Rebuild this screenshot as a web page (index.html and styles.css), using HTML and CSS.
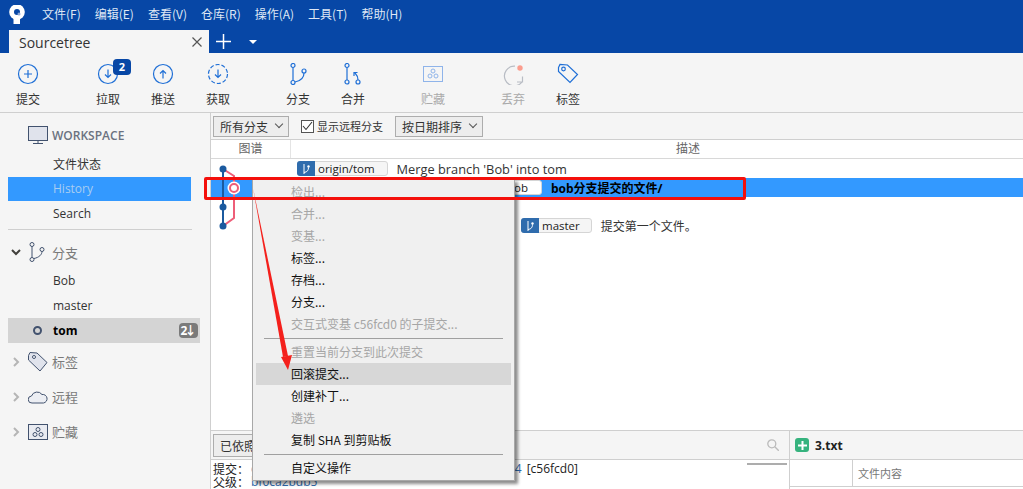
FILE: index.html
```html
<!DOCTYPE html>
<html lang="zh-CN">
<head>
    <meta charset="UTF-8">
    <title>Sourcetree</title>
    <link rel="stylesheet" href="styles.css">
</head>
<body>
    <header class="menubar">
        <svg class="app-logo" width="18" height="20" viewBox="0 0 18 20">
            <circle cx="9" cy="7" r="7.800" fill="#fff"/>
            <path d="M5.500 12h6.500v7H5.500z" fill="#fff"/>
            <circle cx="9" cy="7" r="3" fill="#0747a6"/>
            <circle cx="11" cy="9" r="1.500" fill="#8fa9d6"/>
        </svg>
        <nav class="menu-items">
            <span>文件(F)</span><span>编辑(E)</span><span>查看(V)</span><span>仓库(R)</span><span>操作(A)</span><span>工具(T)</span><span>帮助(H)</span>
        </nav>
    </header>

    <div class="tabstrip">
        <div class="tab">
            <span>Sourcetree</span>
            <svg width="10" height="10" viewBox="0 0 10 10"><path d="M.5.500l9 9M9.500.500l-9 9" stroke="#555" stroke-width="1.200"/></svg>
        </div>
        <svg class="tab-plus" width="15" height="15" viewBox="0 0 15 15"><path d="M7.500 0v15M0 7.500h15" stroke="#fff" stroke-width="1.500"/></svg>
        <span class="tab-caret"></span>
    </div>

    <div class="toolbar">
        <div class="tool tool-commit">
            <svg width="22" height="22" viewBox="0 0 22 22"><circle cx="11" cy="11" r="9.500" class="ic"/><path d="M11 7v8M7 11h8" class="ic"/></svg>
            <span>提交</span>
        </div>
        <div class="tool tool-pull">
            <svg width="22" height="22" viewBox="0 0 22 22"><circle cx="11" cy="11" r="9.500" class="ic"/><path d="M11 6.500v8M8 11.500l3 3 3-3" class="ic"/></svg>
            <span>拉取</span>
            <b class="badge">2</b>
        </div>
        <div class="tool tool-push">
            <svg width="22" height="22" viewBox="0 0 22 22"><circle cx="11" cy="11" r="9.500" class="ic"/><path d="M11 15.500v-8M8 10.500l3-3 3 3" class="ic"/></svg>
            <span>推送</span>
        </div>
        <div class="tool tool-fetch">
            <svg width="22" height="22" viewBox="0 0 22 22"><circle cx="11" cy="11" r="9.500" class="ic" stroke-dasharray="4 2"/><path d="M11 6.500v8M8 11.500l3 3 3-3" class="ic"/></svg>
            <span>获取</span>
        </div>
        <div class="tool tool-branch">
            <svg width="22" height="22" viewBox="0 0 22 22"><circle cx="6" cy="2.500" r="2" class="ic"/><circle cx="6" cy="19.500" r="2" class="ic"/><circle cx="17" cy="8" r="2" class="ic"/><path d="M6 4.500v13M8 19c5-1 9-4 9-9" class="ic"/></svg>
            <span>分支</span>
        </div>
        <div class="tool tool-merge">
            <svg width="22" height="22" viewBox="0 0 22 22"><circle cx="5" cy="2.500" r="2" class="ic"/><circle cx="5" cy="19" r="2" class="ic"/><circle cx="16" cy="19" r="2" class="ic"/><path d="M5 4.500v12.500M16 17c0-3-1-5-3-7M12 13V9.500h3.500" class="ic"/></svg>
            <span>合并</span>
        </div>
        <div class="tool tool-stash is-off">
            <svg width="22" height="22" viewBox="0 0 22 22"><rect x="1.500" y="3.500" width="19" height="15" class="ic-pale"/><circle cx="11" cy="8" r="2" class="ic-pale"/><circle cx="8" cy="13" r="2" class="ic-pale"/><circle cx="14" cy="13" r="2" class="ic-pale"/></svg>
            <span>贮藏</span>
        </div>
        <div class="tool tool-discard is-off">
            <svg width="22" height="22" viewBox="0 0 22 22"><path d="M13 3.200a9.800 9.800 0 1 0 7 15.800M20.500 13.500V19H15" fill="none" stroke="#b8bcc4" stroke-width="1.200"/><circle cx="18" cy="5" r="2.700" fill="#fb9d8e"/></svg>
            <span>丢弃</span>
        </div>
        <div class="tool tool-tag">
            <svg width="22" height="22" viewBox="0 0 22 22"><path d="M1.500 4.500L3 1.500l7.500.5 10 9.500-7.500 8-11.500-11z" class="ic"/><circle cx="6.500" cy="6" r="1.800" class="ic"/></svg>
            <span>标签</span>
        </div>
    </div>

    <main class="workspace">
        <aside class="sidebar">
            <div class="side-head">
                <svg width="20" height="19" viewBox="0 0 20 19"><rect x=".5" y=".5" width="19" height="14" fill="#e0e3ec" stroke="#42526e"/><path d="M10 15v2M5 17.500h10" stroke="#42526e"/></svg>
                <span>WORKSPACE</span>
            </div>
            <div class="side-item">文件状态</div>
            <div class="side-item is-active">History</div>
            <div class="side-item">Search</div>
            <hr class="side-rule">
            <div class="side-group side-branches">
                <svg class="chevron-open" width="10" height="7" viewBox="0 0 10 7"><path d="M1 1l4 4 4-4" fill="none" stroke="#42403c" stroke-width="2"/></svg>
                <svg class="side-icon" width="20" height="20" viewBox="-1 0 20 20"><circle cx="3" cy="2.500" r="2" class="ic-dark"/><circle cx="3" cy="17.500" r="2" class="ic-dark"/><circle cx="13" cy="7.500" r="2" class="ic-dark"/><path d="M3 4.500v11M5 16.500c5-1 8-4 8-7" class="ic-dark"/></svg>
                <span>分支</span>
            </div>
            <div class="side-item">Bob</div>
            <div class="side-item">master</div>
            <div class="side-item is-current">
                <span class="head-dot"></span><b>tom</b><span class="behind">2↓</span>
            </div>
            <div class="side-group">
                <svg class="chevron" width="7" height="10" viewBox="0 0 7 10"><path d="M1 1l4 4-4 4" fill="none" stroke="#b5b5b5" stroke-width="2"/></svg>
                <svg class="side-icon" width="20" height="20" viewBox="0 0 20 20"><path d="M.5 3.500L2 .5l7 .5 10 9.500-7 8.500L.5 8z" fill="#e0e3ec" stroke="#42526e"/><circle cx="6" cy="5" r="1.500" fill="#fff" stroke="#42526e"/></svg>
                <span>标签</span>
            </div>
            <div class="side-group">
                <svg class="chevron" width="7" height="10" viewBox="0 0 7 10"><path d="M1 1l4 4-4 4" fill="none" stroke="#b5b5b5" stroke-width="2"/></svg>
                <svg class="side-icon" width="20" height="14" viewBox="0 0 20 14"><path d="M4 13a3.500 3.500 0 0 1-.5-7A6 6 0 0 1 14 4.500 4.300 4.300 0 0 1 15.500 13z" fill="#eceef3" stroke="#42526e"/></svg>
                <span>远程</span>
            </div>
            <div class="side-group">
                <svg class="chevron" width="7" height="10" viewBox="0 0 7 10"><path d="M1 1l4 4-4 4" fill="none" stroke="#b5b5b5" stroke-width="2"/></svg>
                <svg class="side-icon" width="20" height="16" viewBox="0 0 20 16"><rect x=".5" y=".5" width="19" height="15" fill="#e9ebf1" stroke="#42526e"/><circle cx="10" cy="5.500" r="2" fill="none" stroke="#42526e"/><circle cx="7" cy="10.500" r="2" fill="none" stroke="#42526e"/><circle cx="13" cy="10.500" r="2" fill="none" stroke="#42526e"/></svg>
                <span>贮藏</span>
            </div>
        </aside>

        <section class="content">
            <div class="filterbar">
                <div class="select">所有分支<i class="caret"></i></div>
                <label class="check"><span class="box"><svg width="11" height="10" viewBox="0 0 11 10"><path d="M1 5l3 3.500L10 1" fill="none" stroke="#333" stroke-width="1.100"/></svg></span>显示远程分支</label>
                <div class="select">按日期排序<i class="caret"></i></div>
            </div>
            <div class="table-head">
                <div class="col-graph">图谱</div>
                <div class="col-desc">描述</div>
            </div>
            <div class="commits">
                <div class="row">
                    <div class="graph-cell"></div>
                    <span class="ref ref-origin"><i class="ref-icon"><svg width="10" height="12" viewBox="0 0 10 12"><path d="M3 1v10M3 9.500c3.500-.5 4.500-2.500 4.500-5" fill="none" stroke="#fff"/><circle cx="7.500" cy="3.500" r="1.200" fill="#fff"/></svg></i>origin/tom</span>
                    <span class="msg msg-en">Merge branch 'Bob' into tom</span>
                </div>
                <div class="row is-selected">
                    <div class="graph-cell"></div>
                    <span class="ref ref-bob">ob</span>
                    <span class="msg"><b>bob分支提交的文件/</b></span>
                </div>
                <div class="row"><div class="graph-cell"></div></div>
                <div class="row">
                    <div class="graph-cell"></div>
                    <span class="ref ref-master"><i class="ref-icon"><svg width="10" height="12" viewBox="0 0 10 12"><path d="M3 1v10M3 9.500c3.500-.5 4.500-2.500 4.500-5" fill="none" stroke="#fff"/><circle cx="7.500" cy="3.500" r="1.200" fill="#fff"/></svg></i>master</span>
                    <span class="msg">提交第一个文件。</span>
                </div>
                <svg class="graph" width="30" height="76" viewBox="0 0 30 76">
                    <path d="M13 10v57" stroke="#1b5a9f" stroke-width="2"/>
                    <path d="M13 10l11 7v42l-11 8" fill="none" stroke="#ee5e78" stroke-width="2"/>
                    <circle cx="13" cy="10" r="3.500" fill="#1b5a9f"/>
                    <circle cx="13" cy="48" r="3.500" fill="#1b5a9f"/>
                    <circle cx="13" cy="67" r="3.500" fill="#1b5a9f"/>
                    <circle cx="24" cy="29" r="6.500" fill="#fff"/>
                    <circle cx="24" cy="29" r="4" fill="#fff" stroke="#ee5e78" stroke-width="2"/>
                </svg>
            </div>
            <div class="details">
                <div class="detail-left">
                    <div class="detail-bar">
                        <div class="select select-sort">已依照</div>
                        <svg class="search" width="12" height="12" viewBox="0 0 12 12"><circle cx="4.800" cy="4.800" r="4" fill="none" stroke="#bbb" stroke-width="1.300"/><path d="M7.800 7.800l4 4" stroke="#bbb" stroke-width="1.300"/></svg>
                    </div>
                    <div class="detail-meta">
                        <div class="meta-line"><span class="meta-key">提交：</span><span class="hash">c</span><span class="hash hash-end">4</span><span class="short-hash">[c56fcd0]</span></div>
                        <div class="meta-line"><span class="meta-key">父级：</span><span class="hash">bf0ca2bdb5</span></div>
                        <i class="meta-scroll"></i>
                    </div>
                </div>
                <div class="detail-right">
                    <div class="file-bar">
                        <span class="added"><svg width="9" height="9" viewBox="0 0 9 9"><path d="M4.500 0v9M0 4.500h9" stroke="#fff" stroke-width="2"/></svg></span>
                        <b>3.txt</b>
                    </div>
                    <div class="file-head">
                        <div class="file-gutter"></div>
                        <div class="file-label">文件内容</div>
                    </div>
                </div>
            </div>
        </section>
    </main>

    <!-- right click menu on the selected commit -->
    <div class="context-menu">
        <div class="menu-row is-off">检出...</div>
        <div class="menu-row is-off">合并...</div>
        <div class="menu-row is-off">变基...</div>
        <div class="menu-row">标签...</div>
        <div class="menu-row">存档...</div>
        <div class="menu-row">分支...</div>
        <div class="menu-row is-off">交互式变基 c56fcd0 的子提交...</div>
        <hr class="menu-rule">
        <div class="menu-row is-off">重置当前分支到此次提交</div>
        <div class="menu-row is-hover">回滚提交...</div>
        <div class="menu-row">创建补丁...</div>
        <div class="menu-row is-off">遴选</div>
        <div class="menu-row">复制 SHA 到剪贴板</div>
        <hr class="menu-rule">
        <div class="menu-row">自定义操作</div>
    </div>

    <!-- screenshot annotations -->
    <div class="mark-box"></div>
    <svg class="mark-arrow" width="50" height="190" viewBox="0 0 50 190">
        <path d="M3 3l30 169 5-1z" fill="#f4201c"/>
        <path d="M31 172l11-2-4 15z" fill="#f4201c"/>
    </svg>
</body>
</html>
```

FILE: styles.css
```css
* {
    margin: 0;
    padding: 0;
    box-sizing: border-box;
}

html, body {
    height: 489px;
    overflow: hidden;
}

body {
    position: relative;
    display: flex;
    flex-direction: column;
    font-family: "Noto Sans CJK SC", "Liberation Sans", sans-serif;
    font-size: 12px;
    color: #222;
    background: #fff;
}

/* Title + tabs */
.menubar {
    height: 30px;
    display: flex;
    align-items: center;
    background: #0747a6;
    color: #dfe8f5;
    padding: 0 0 4px 8px;
}

.app-logo {
    flex: none;
    align-self: flex-start;
    margin-top: 5px;
}

.menu-items {
    display: flex;
    gap: 14px;
    margin-left: 16px;
    font-size: 12px;
}

.tabstrip {
    height: 23px;
    display: flex;
    align-items: center;
    background: #0747a6;
    padding-left: 9px;
}

.tab {
    width: 200px;
    height: 23px;
    display: flex;
    align-items: center;
    justify-content: space-between;
    padding: 1px 7px 0 10px;
    background: #f5f5f5;
    color: #333;
    font-family: "Open Sans", sans-serif;
    font-size: 14px;
}

.tab-plus {
    margin-left: 7px;
}

.tab-caret {
    margin-left: 18px;
    border: 4px solid transparent;
    border-top: 4px solid #fff;
    border-bottom: 0;
}

/* Toolbar */
.toolbar {
    height: 60px;
    display: flex;
    background: #f5f5f5;
    border-bottom: 1px solid #cfcfcf;
    padding-left: 16px;
}

.tool {
    position: relative;
    width: 24px;
    display: flex;
    flex-direction: column;
    align-items: center;
    padding-top: 10px;
    gap: 5px;
    font-size: 12px;
    color: #333;
}

.tool svg {
    flex: none;
}

.tool span {
    white-space: nowrap;
}

.tool-pull { margin-left: 56px; }
.tool-push { margin-left: 31px; }
.tool-fetch { margin-left: 31px; }
.tool-branch { margin-left: 56px; }
.tool-merge { margin-left: 31px; }
.tool-stash { margin-left: 56px; }
.tool-discard { margin-left: 56px; }
.tool-tag { margin-left: 31px; }

.tool.is-off {
    color: #aaa;
}

.ic {
    fill: none;
    stroke: #1f6fd6;
    stroke-width: 1.200;
}

.ic-pale {
    fill: none;
    stroke: #8fb4ea;
    stroke-width: 1;
}

.ic-dark {
    fill: none;
    stroke: #42526e;
    stroke-width: 1;
}

.badge {
    position: absolute;
    top: 6px;
    left: 17px;
    width: 18px;
    height: 16px;
    border-radius: 4px;
    background: #0747a6;
    color: #fff;
    font-family: "Open Sans", sans-serif;
    font-size: 11px;
    line-height: 15px;
    text-align: center;
}

/* Main split */
.workspace {
    flex: 1;
    display: flex;
    min-height: 0;
}

.sidebar {
    width: 211px;
    flex: none;
    background: #f5f5f5;
    padding-left: 8px;
    border-right: 1px solid #cfcfcf;
}

.side-head {
    height: 39px;
    display: flex;
    align-items: center;
    gap: 4px;
    padding: 5px 0 0 20px;
    color: #6b7280;
    font-family: "Open Sans", sans-serif;
    font-size: 12px;
    font-weight: 600;
}

.side-item {
    width: 183px;
    height: 25px;
    line-height: 25px;
    padding-left: 45px;
    color: #333;
    font-family: "Open Sans", "Noto Sans CJK SC", sans-serif;
    font-size: 12px;
}

.side-item.is-active {
    height: 24px;
    line-height: 24px;
    background: #3399ff;
    color: #a9cdf1;
}

.side-rule {
    width: 184px;
    border: 0;
    border-top: 1px solid #cfcfcf;
    margin-top: 3px;
}

.side-group {
    height: 35px;
    display: flex;
    align-items: center;
    color: #7a7a7a;
    font-size: 13px;
}

.side-branches {
    height: 38px;
    padding-top: 6px;
}

.chevron {
    flex: none;
    margin: 0 8px 0 5px;
}

.chevron-open {
    flex: none;
    margin: 0 7px 0 3px;
}

.side-icon {
    flex: none;
    margin-right: 4px;
}

.side-item.is-current {
    width: 192px;
    height: 25px;
    display: flex;
    align-items: center;
    background: #d4d4d4;
    padding-left: 25px;
    margin-bottom: 1px;
    color: #000;
}

.head-dot {
    width: 9px;
    height: 9px;
    border: 2px solid #42526e;
    border-radius: 50%;
    margin-right: 11px;
}

.behind {
    margin-left: auto;
    margin-right: 2px;
    width: 19px;
    height: 15px;
    line-height: 15px;
    border-radius: 4px;
    background: #7a7a7a;
    color: #fff;
    font-weight: 700;
    text-align: center;
    letter-spacing: -3px;
    padding-right: 3px;
}

.content {
    flex: 1;
    min-width: 0;
    display: flex;
    flex-direction: column;
}

.filterbar {
    height: 27px;
    display: flex;
    align-items: center;
    gap: 12px;
    background: #f5f5f5;
    border-bottom: 1px solid #cfcfcf;
    padding-left: 2px;
}

.select {
    height: 21px;
    display: flex;
    align-items: center;
    gap: 8px;
    padding: 0 6px;
    border: 1px solid #adadad;
    background: #ededed;
    font-size: 12px;
    color: #333;
}

.caret {
    width: 6px;
    height: 6px;
    border-right: 1px solid #555;
    border-bottom: 1px solid #555;
    transform: translateY(-2px) rotate(45deg);
}

.check {
    display: flex;
    align-items: center;
    gap: 3px;
    font-size: 11px;
    color: #333;
}

.box {
    width: 13px;
    height: 13px;
    display: flex;
    align-items: center;
    justify-content: center;
    border: 1px solid #555;
    background: #fff;
}

.table-head {
    height: 19px;
    display: flex;
    border-bottom: 1px solid #d8d8d8;
    font-size: 12px;
    line-height: 16px;
    color: #666;
    text-align: center;
}

.col-graph {
    width: 80px;
    border-right: 1px solid #e4e4e4;
}

.col-desc {
    flex: 1;
    padding-left: 62px;
}

.commits {
    position: relative;
    flex: 1;
}

.row {
    height: 19px;
    display: flex;
    align-items: center;
    font-size: 12px;
    white-space: nowrap;
}

.graph-cell {
    width: 85px;
    flex: none;
}

.row.is-selected {
    background: #3399ff;
    color: #000;
}

.graph {
    position: absolute;
    left: -1px;
    top: 0;
}

.ref {
    display: flex;
    align-items: center;
    height: 15px;
    margin-left: 1px;
    margin-right: 9px;
    padding-right: 12px;
    border: 1px solid #d5d5d5;
    border-radius: 3px;
    background: #f5f5f5;
    font-family: "Open Sans", sans-serif;
    font-size: 11.500px;
    color: #222;
}

.ref-icon {
    width: 18px;
    height: 15px;
    margin: -1px 3px -1px -1px;
    display: flex;
    align-items: center;
    justify-content: center;
    border-radius: 3px 0 0 3px;
    background: #2f6cad;
}

.ref-bob {
    margin-left: 213px;
    width: 33px;
    justify-content: flex-end;
    padding-right: 13px;
    background: #fff;
}

.ref-master {
    margin-left: 225px;
    padding-right: 11px;
}

.msg {
    font-family: "Open Sans", "Noto Sans CJK SC", sans-serif;
    font-size: 12px;
    color: #333;
}

.msg-en {
    font-size: 12.800px;
}

.is-selected .msg {
    color: #000;
}

.details {
    height: 59px;
    flex: none;
    display: flex;
    border-top: 1px solid #cfcfcf;
}

.detail-left {
    width: 579px;
    flex: none;
    display: flex;
    flex-direction: column;
    border-right: 1px solid #cfcfcf;
}

.detail-bar {
    height: 29px;
    flex: none;
    display: flex;
    align-items: center;
    justify-content: space-between;
    padding: 0 10px 0 2px;
    background: #f5f5f5;
    border-bottom: 1px solid #cfcfcf;
}

.select-sort {
    height: 23px;
    width: 60px;
}

.detail-meta {
    position: relative;
    flex: 1;
    padding: 2px 0 0 2px;
    font-size: 12px;
    line-height: 13px;
    white-space: nowrap;
}

.meta-line {
    display: flex;
    height: 13px;
}

.meta-key {
    width: 38px;
}

.hash {
    font-family: "Open Sans", sans-serif;
    color: #2f6cad;
}

.hash-end {
    margin-left: 258px;
}

.short-hash {
    margin-left: 5px;
    font-family: "Open Sans", sans-serif;
}

.meta-scroll {
    position: absolute;
    right: 2px;
    top: 3px;
    width: 40px;
    height: 2px;
    background: #adadad;
}

.detail-right {
    flex: 1;
    min-width: 0;
}

.file-bar {
    height: 29px;
    display: flex;
    align-items: center;
    gap: 6px;
    padding-left: 5px;
    background: #f5f5f5;
    border-bottom: 1px solid #cfcfcf;
    font-family: "Open Sans", sans-serif;
    font-size: 12px;
}

.added {
    width: 14px;
    height: 14px;
    display: flex;
    align-items: center;
    justify-content: center;
    border-radius: 3px;
    background: #36b37e;
}

.file-head {
    height: 27px;
    display: flex;
    border-bottom: 1px solid #cfcfcf;
    color: #777;
    font-size: 11px;
}

.file-gutter {
    width: 63px;
    border-right: 1px solid #cfcfcf;
}

.file-label {
    padding: 5px 5px;
}

/* Context menu */
.context-menu {
    position: absolute;
    left: 252px;
    top: 179px;
    width: 263px;
    height: 302px;
    padding: 1px 3px;
    background: #f0f0f0;
    border: 1px solid #a8a8a8;
    box-shadow: 3px 3px 3px rgba(0, 0, 0, 0.45);
    font-size: 12px;
    color: #111;
}

.menu-row {
    height: 22px;
    line-height: 22px;
    padding-left: 35px;
    white-space: nowrap;
}

.menu-row.is-off {
    color: #a6a6a6;
}

.menu-row.is-hover {
    background: #d7d7d7;
}

.menu-rule {
    border: 0;
    border-top: 1px solid #a0a0a0;
    margin: 3px 8px 2px 8px;
}

/* Annotations */
.mark-box {
    position: absolute;
    left: 204px;
    top: 177px;
    width: 542px;
    height: 23px;
    border: 3px solid #f4100c;
    border-radius: 2px;
}

.mark-arrow {
    position: absolute;
    left: 250px;
    top: 185px;
}
```
